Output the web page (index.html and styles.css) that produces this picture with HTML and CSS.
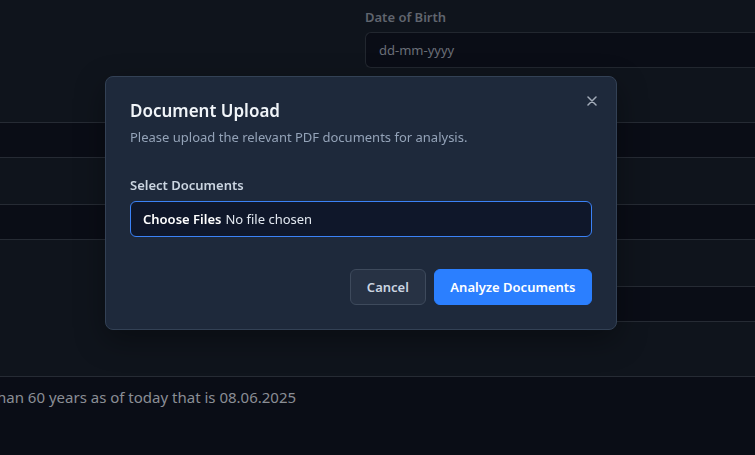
FILE: index.html
```html
<!DOCTYPE html>
<html lang="en">
<head>
<meta charset="utf-8">
<title>Document Upload</title>
<link rel="stylesheet" href="styles.css">
</head>
<body>
<main class="page">
  <div class="split">
    <div></div>
    <div class="field">
      <label class="field-label" for="dob">Date of Birth</label>
      <input id="dob" class="text-input" type="text" placeholder="dd-mm-yyyy">
    </div>
  </div>
  <div class="gap gap-lg"></div>
  <div class="bar"></div>
  <div class="gap"></div>
  <div class="bar"></div>
  <div class="gap"></div>
  <div class="split">
    <div></div>
    <div class="bar"></div>
  </div>
  <div class="gap gap-lg"></div>
  <footer class="note">
    <p class="note-text"><span class="note-hidden">Applicant age should not be more t</span>han 60 years as of today that is 08.06.2025</p>
  </footer>
</main>

<div class="overlay">
  <section class="modal" role="dialog" aria-labelledby="modal-title">
    <button class="close" type="button" aria-label="Close">
      <svg width="10" height="10" viewBox="0 0 10 10" aria-hidden="true"><path d="M1 1L9 9M9 1L1 9" stroke="currentColor" stroke-width="1.5" stroke-linecap="round"/></svg>
    </button>
    <header class="modal-head">
      <h2 id="modal-title" class="modal-title">Document Upload</h2>
      <p class="modal-desc">Please upload the relevant PDF documents for analysis.</p>
    </header>
    <div class="modal-body">
      <label class="modal-label" for="docs">Select Documents</label>
      <input id="docs" class="file-input" type="file" multiple accept="application/pdf">
    </div>
    <div class="modal-foot">
      <button class="btn btn-outline" type="button">Cancel</button>
      <button class="btn btn-primary" type="button">Analyze Documents</button>
    </div>
  </section>
</div>
</body>
</html>
```

FILE: styles.css
```css
* { box-sizing: border-box; }

html, body {
  margin: 0;
  height: 100%;
}

body {
  background: #0f141c;
  font-family: "Noto Sans", "Liberation Sans", sans-serif;
  overflow: hidden;
  color: #e2e8f0;
}

.page {
  width: 100%;
  height: 100%;
  padding-top: 7px;
  display: flex;
  flex-direction: column;
  overflow: hidden;
}

.split {
  display: grid;
  grid-template-columns: 349px 1fr;
  column-gap: 16px;
}

.field {
  display: flex;
  flex-direction: column;
  gap: 4px;
}

.field-label {
  font-size: 13px;
  line-height: 21px;
  font-weight: 600;
  color: #60656e;
}

.text-input {
  height: 36px;
  width: 100%;
  border: 1px solid #22272f;
  border-right: 0;
  border-radius: 6px 0 0 6px;
  background: #0a0d16;
  padding: 0 13px;
  font-family: inherit;
  font-size: 13px;
  color: #e2e8f0;
}
.text-input::placeholder { color: #6a6f78; }

.gap { height: 46px; flex: none; }
.gap-lg { height: 54px; }

.bar {
  height: 36px;
  flex: none;
  border-top: 1px solid #262b34;
  border-bottom: 1px solid #262b34;
  background: #0a0d16;
}

.split .bar {
  border-left: 1px solid #262b34;
  border-radius: 6px 0 0 6px;
}

.note {
  flex: 1;
  border-top: 1px solid #262b34;
  background: #0a0d16;
  padding-top: 9px;
  overflow: hidden;
}

.note-text {
  margin: 0 0 0 -3px;
  font-size: 15px;
  line-height: 22px;
  color: #8a8e95;
  white-space: nowrap;
}

.note-hidden {
  display: inline-block;
  width: 0;
  direction: rtl;
  white-space: nowrap;
}

/* Dialog */
.overlay {
  position: fixed;
  inset: 0;
}

.modal {
  position: absolute;
  top: 76px;
  left: 105px;
  width: 512px;
  background: #1e293b;
  border: 1px solid #334155;
  border-radius: 8px;
  padding: 22px 24px 24px;
  box-shadow: 0 10px 30px rgba(0, 0, 0, 0.35);
}

.close {
  position: absolute;
  top: 16px;
  right: 16px;
  width: 16px;
  height: 16px;
  padding: 0;
  border: 0;
  background: none;
  color: #a3acb9;
  display: flex;
  align-items: center;
  justify-content: center;
}

.modal-head {
  display: flex;
  flex-direction: column;
  gap: 4px;
}

.modal-title {
  margin: 0;
  font-size: 17px;
  line-height: 24px;
  font-weight: 600;
  color: #f1f5f9;
}

.modal-desc {
  margin: 0;
  font-size: 13px;
  line-height: 20px;
  color: #94a3b8;
}

.modal-body {
  margin-top: 28px;
  display: flex;
  flex-direction: column;
  gap: 6px;
}

.modal-label {
  font-size: 13px;
  line-height: 20px;
  font-weight: 600;
  color: #cbd5e1;
}

.file-input {
  height: 36px;
  width: 100%;
  border: 1px solid #3b82f6;
  border-radius: 6px;
  background: #0f172a;
  padding: 7px 12px;
  font-family: inherit;
  font-size: 13px;
  line-height: 20px;
  color: #e2e8f0;
}

.file-input::file-selector-button {
  border: 0;
  background: transparent;
  padding: 0;
  margin: 0 4px 0 0;
  font-family: inherit;
  font-size: 13px;
  line-height: 20px;
  font-weight: 600;
  color: #ffffff;
}

.modal-foot {
  margin-top: 32px;
  display: flex;
  justify-content: flex-end;
  gap: 8px;
}

.btn {
  height: 36px;
  padding: 0 16px;
  border-radius: 6px;
  font-family: inherit;
  font-size: 13px;
  font-weight: 600;
  white-space: nowrap;
}

.btn-outline {
  background: #273244;
  border: 1px solid #3e4a5c;
  color: #cbd5e1;
}

.btn-primary {
  padding: 0 15.5px;
  background: #2b7fff;
  border: 1px solid #2b7fff;
  color: #ffffff;
}
```
